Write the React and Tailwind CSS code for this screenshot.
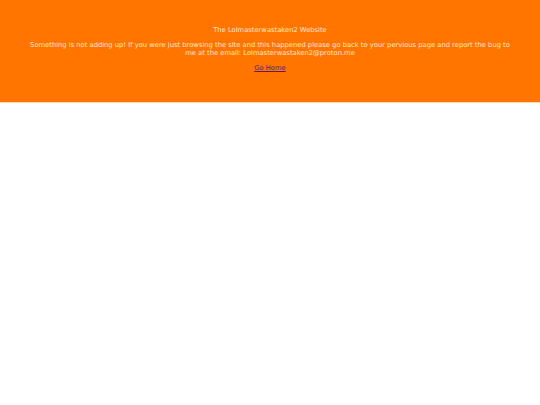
export default function App() {
  return (
    <div className="min-h-[405px] bg-white" style={{ fontFamily: '"DejaVu Sans", Verdana, sans-serif' }}>
      <div className="h-[103px] bg-[#ff7500] text-center text-[6.75px] leading-[8px] text-[#ffe9c8] pt-[26px] px-[26px] border-b border-[#f3d9b0]">
        <p>The Lolmasterwastaken2 Website</p>
        <p className="mt-[7px]">
          Something is not adding up! If you were just browsing the site and this happened please go back to your pervious page and report the bug to me at the email: Lolmasterwastaken2@proton.me
        </p>
        <p className="mt-[7px]">
          <a href="#" className="underline text-[#5a1a6e]">Go Home</a>
        </p>
      </div>
    </div>
  );
}
